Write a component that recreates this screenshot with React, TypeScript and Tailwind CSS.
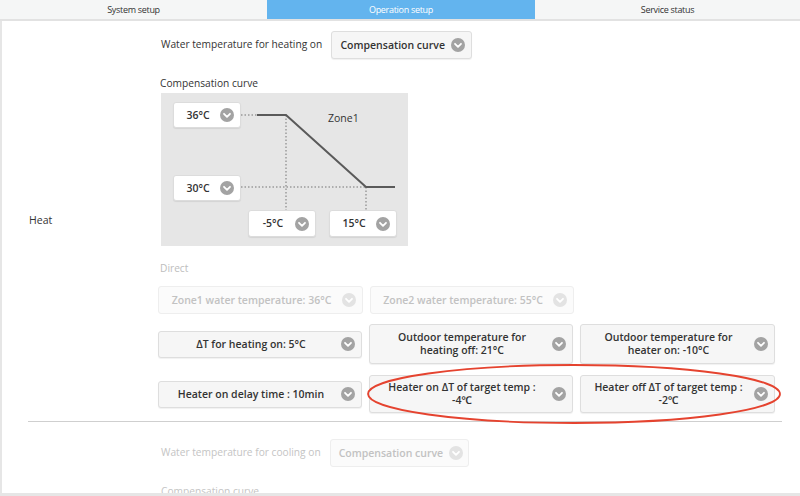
import React from 'react'

const font = { fontFamily: '"Open Sans", "Noto Sans", sans-serif' }

function Chevron({ light = false }: { light?: boolean }) {
  return (
    <svg width="14" height="14" viewBox="0 0 14 14" className="shrink-0">
      <circle cx="7" cy="7" r="7" fill={light ? '#e3e3e3' : '#a3a3a3'} />
      <path d="M4 5.8 L7 8.8 L10 5.8" fill="none" stroke="#fff" strokeWidth="1.8" strokeLinecap="round" strokeLinejoin="round" />
    </svg>
  )
}

function Select({
  label,
  className = '',
  disabled = false,
  white = false,
}: {
  label: React.ReactNode
  className?: string
  disabled?: boolean
  white?: boolean
}) {
  return (
    <div
      className={`flex items-center gap-[6px] rounded-[3px] border pl-[8px] pr-[6px] ${
        white ? 'bg-white border-[#dcdcdc] shadow-[0_1px_1px_rgba(0,0,0,0.08)]' : disabled ? 'bg-[#fbfbfb] border-[#eeeeee]' : 'bg-[#f6f6f6] border-[#dedede] shadow-[0_1px_1px_rgba(0,0,0,0.06)]'
      } ${className}`}
    >
      <div
        className={`flex-1 text-center text-[10.5px] font-semibold leading-[13px] whitespace-nowrap ${disabled ? 'text-[#c2c2c2]' : 'text-[#333]'}`}
      >
        {label}
      </div>
      <Chevron light={disabled} />
    </div>
  )
}

function CurveChart() {
  return (
    <div className="relative w-[247px] h-[153px] bg-[#e6e6e6] mt-[3px]">
      <svg width="247" height="153" className="absolute left-0 top-0">
        <g stroke="#9a9a9a" strokeWidth="1.5" strokeDasharray="1.5 2" fill="none">
          <line x1="80" y1="22" x2="96" y2="22" />
          <line x1="125" y1="22" x2="125" y2="117" />
          <line x1="80" y1="94" x2="205" y2="94" />
          <line x1="205" y1="94" x2="205" y2="117" />
        </g>
        <polyline points="96,22 125,22 205,94 234,94" fill="none" stroke="#5a5a5a" strokeWidth="2" />
      </svg>
      <div className="absolute left-[167px] top-[18px] text-[10.5px] text-[#333]">Zone1</div>
      <Select white label="36°C" className="absolute left-[12px] top-[9px] w-[68px] h-[26px]" />
      <Select white label="30°C" className="absolute left-[12px] top-[82px] w-[68px] h-[26px]" />
      <Select white label="-5°C" className="absolute left-[87px] top-[117px] w-[68px] h-[27px]" />
      <Select white label="15°C" className="absolute left-[168px] top-[117px] w-[68px] h-[27px]" />
    </div>
  )
}

export default function App() {
  return (
    <div className="w-[800px] h-[496px] overflow-hidden bg-white flex flex-col" style={font}>
      <div className="flex h-[21px] shrink-0 border-b-2 border-[#e2e2e2] text-[9px] tracking-[-0.3px]">
        <div className="w-[267px] flex items-center justify-center bg-[#f5f6f6] text-[#333]">System setup</div>
        <div className="w-[268px] flex items-center justify-center bg-[#63b4ee] text-white">Operation setup</div>
        <div className="flex-1 flex items-center justify-center bg-[#f5f6f6] text-[#333]">Service status</div>
      </div>
      <div className="flex-1 min-h-0 flex flex-col border-l-2 border-[#e6e6e6] border-b-[3px] border-b-[#e6e6e6] overflow-hidden">
        <div className="flex">
          <div className="w-[156px] shrink-0 flex items-center pl-[27px] text-[10.5px] text-[#333]">Heat</div>
          <div className="flex flex-col pt-[10px] pb-[8px]">
            <div className="flex items-center gap-[9px] pl-[3px]">
              <span className="text-[10.2px] text-[#333]">Water temperature for heating on</span>
              <Select label="Compensation curve" className="w-[141px] h-[28px]" />
            </div>
            <div className="pl-[2px] mt-[17px] text-[10.2px] text-[#333] leading-[14px]">Compensation curve</div>
            <div className="pl-[3px]">
              <CurveChart />
            </div>
            <div className="pl-[2px] mt-[15px] text-[10.2px] text-[#bdbdbd] leading-[14px]">Direct</div>
            <div className="flex gap-[7px] mt-[11px]">
              <Select disabled label="Zone1 water temperature: 36°C" className="w-[205px] h-[28px]" />
              <Select disabled label="Zone2 water temperature: 55°C" className="w-[204px] h-[28px]" />
            </div>
            <div className="flex items-center gap-[7px] mt-[10px]">
              <Select label="ΔT for heating on: 5°C" className="w-[204px] h-[27px]" />
              <Select label={<>Outdoor temperature for<br />heating off: 21°C</>} className="w-[204px] h-[40px]" />
              <Select label={<>Outdoor temperature for<br />heater on: -10°C</>} className="w-[195px] h-[40px]" />
            </div>
            <div className="relative flex items-center gap-[7px] mt-[11px]">
              <Select label="Heater on delay time : 10min" className="w-[204px] h-[27px]" />
              <Select label={<>Heater on ΔT of target temp :<br />-4℃</>} className="w-[204px] h-[38px]" />
              <Select label={<>Heater off ΔT of target temp :<br />-2℃</>} className="w-[195px] h-[38px]" />
              <svg width="420" height="66" className="absolute left-[206px] top-[-14px] pointer-events-none">
                <ellipse cx="210" cy="33" rx="206" ry="29" fill="none" stroke="#e5432f" strokeWidth="1.8" />
              </svg>
            </div>
          </div>
        </div>
        <div className="ml-[26px] mr-[18px] border-t border-[#cfcfcf]" />
        <div className="flex items-center gap-[9px] pl-[159px] mt-[17px]">
          <span className="text-[10.2px] text-[#c4c4c4]">Water temperature for cooling on</span>
          <Select disabled label="Compensation curve" className="w-[139px] h-[28px]" />
        </div>
        <div className="pl-[159px] mt-[17px] text-[10.2px] text-[#c4c4c4] leading-[14px]">Compensation curve</div>
      </div>
    </div>
  )
}
